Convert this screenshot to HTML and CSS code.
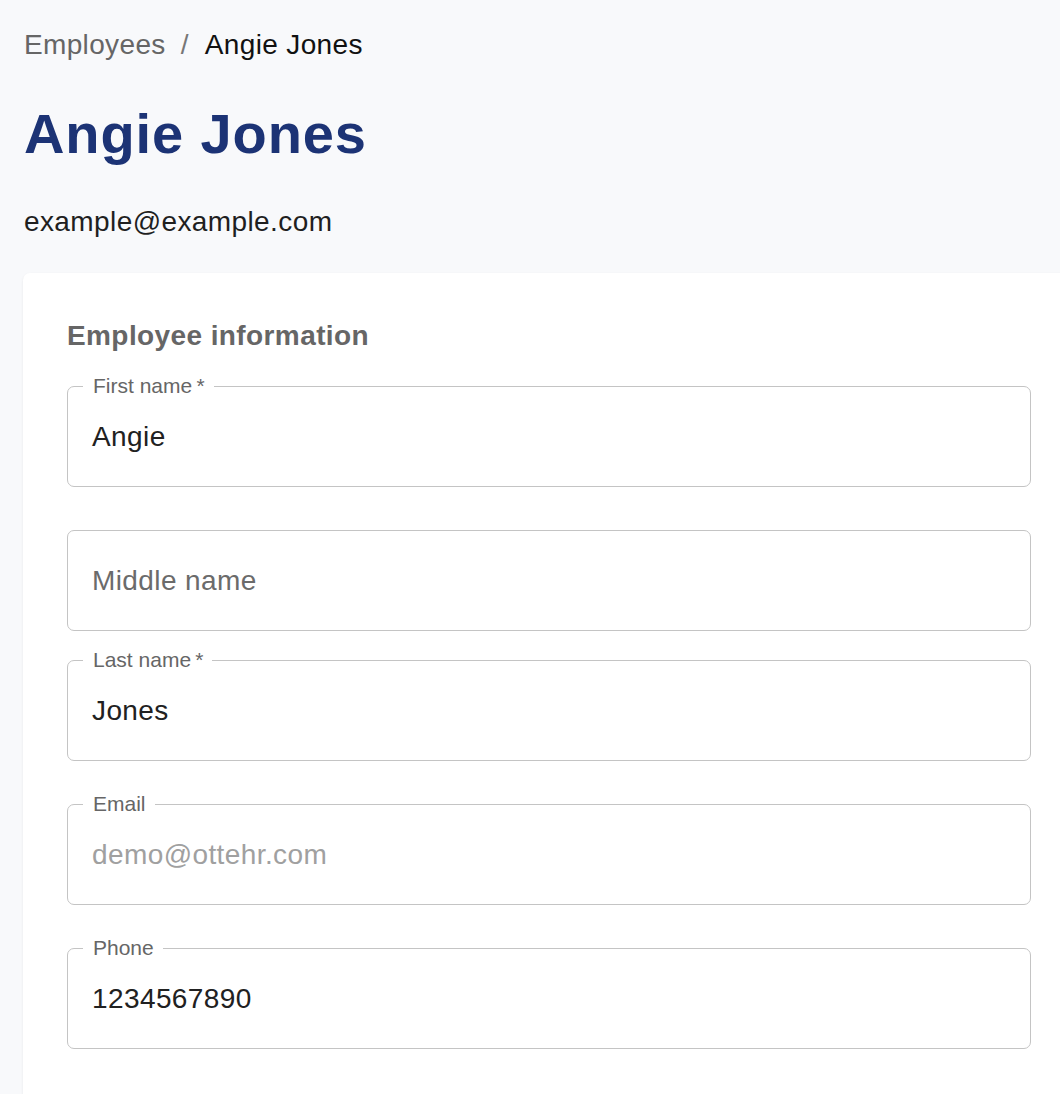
FILE: index.html
```html
<!DOCTYPE html>
<html lang="en">
<head>
<meta charset="utf-8">
<title>Angie Jones</title>
<link rel="stylesheet" href="styles.css">
</head>
<body>
<main class="page">
  <nav class="breadcrumbs">
    <span class="crumb-link">Employees</span>
    <span class="crumb-sep">/</span>
    <span class="crumb-current">Angie Jones</span>
  </nav>
  <h1 class="title">Angie Jones</h1>
  <p class="subtitle">example@example.com</p>

  <section class="card">
    <h2 class="card-heading">Employee information</h2>

    <div class="field field-first">
      <span class="field-label">First name&thinsp;*</span>
      <span class="field-value">Angie</span>
    </div>

    <div class="field field-middle">
      <span class="field-placeholder-label">Middle name</span>
    </div>

    <div class="field field-last">
      <span class="field-label">Last name&thinsp;*</span>
      <span class="field-value">Jones</span>
    </div>

    <div class="field field-email">
      <span class="field-label">Email</span>
      <span class="field-placeholder">demo@ottehr.com</span>
    </div>

    <div class="field field-phone">
      <span class="field-label">Phone</span>
      <span class="field-value">1234567890</span>
    </div>
  </section>
</main>
</body>
</html>
```

FILE: styles.css
```css
* {
  box-sizing: border-box;
}

html, body {
  margin: 0;
  padding: 0;
  background: #f8f9fb;
  overflow: hidden;
}

body {
  font-family: "Liberation Sans", Arial, Helvetica, sans-serif;
  color: rgba(0, 0, 0, 0.87);
}

.page {
  padding: 24px 0 0 24px;
}

.breadcrumbs {
  display: flex;
  align-items: center;
  font-size: 28px;
  line-height: 42px;
  height: 42px;
  letter-spacing: 0.35px;
}

.crumb-link {
  color: #666666;
}

.crumb-sep {
  color: #777777;
  margin: 0 16px 0 15px;
}

.crumb-current {
  color: #111111;
}

.title {
  margin: 34px 0 0;
  font-size: 56px;
  line-height: 67px;
  font-weight: 700;
  letter-spacing: 0.9px;
  color: #1c3375;
}

.subtitle {
  margin: 34px 0 0;
  font-size: 28px;
  line-height: 42px;
  letter-spacing: 0.4px;
  color: #1f1f1f;
}

.card {
  margin: 30px 0 0 -1px;
  width: 1052px;
  min-height: 900px;
  background: #ffffff;
  border-radius: 7px;
  padding: 42px 44px 44px;
  box-shadow: 0 2px 1px -1px rgba(0, 0, 0, 0.06), 0 1px 1px 0 rgba(0, 0, 0, 0.04), 0 1px 3px 0 rgba(0, 0, 0, 0.06);
}

.card-heading {
  margin: 0;
  font-size: 28px;
  line-height: 42px;
  font-weight: 700;
  letter-spacing: 0.4px;
  color: #666666;
}

.field {
  position: relative;
  height: 101px;
  border: 1px solid #c4c4c4;
  border-radius: 7px;
  display: flex;
  align-items: center;
  padding: 0 24px;
  font-size: 28px;
  letter-spacing: 0.4px;
}

.field-first { margin-top: 29px; }
.field-middle { margin-top: 43px; }
.field-last { margin-top: 29px; }
.field-email { margin-top: 43px; }
.field-phone { margin-top: 43px; }

.field-label {
  position: absolute;
  top: -13px;
  left: 15px;
  padding: 0 9px 0 10px;
  background: #ffffff;
  font-size: 21px;
  line-height: 24px;
  letter-spacing: 0;
  color: #666666;
  white-space: nowrap;
}

.field-value {
  color: #212121;
}

.field-placeholder-label {
  color: #6b6b6b;
}

.field-placeholder {
  color: #a0a0a0;
}
```
